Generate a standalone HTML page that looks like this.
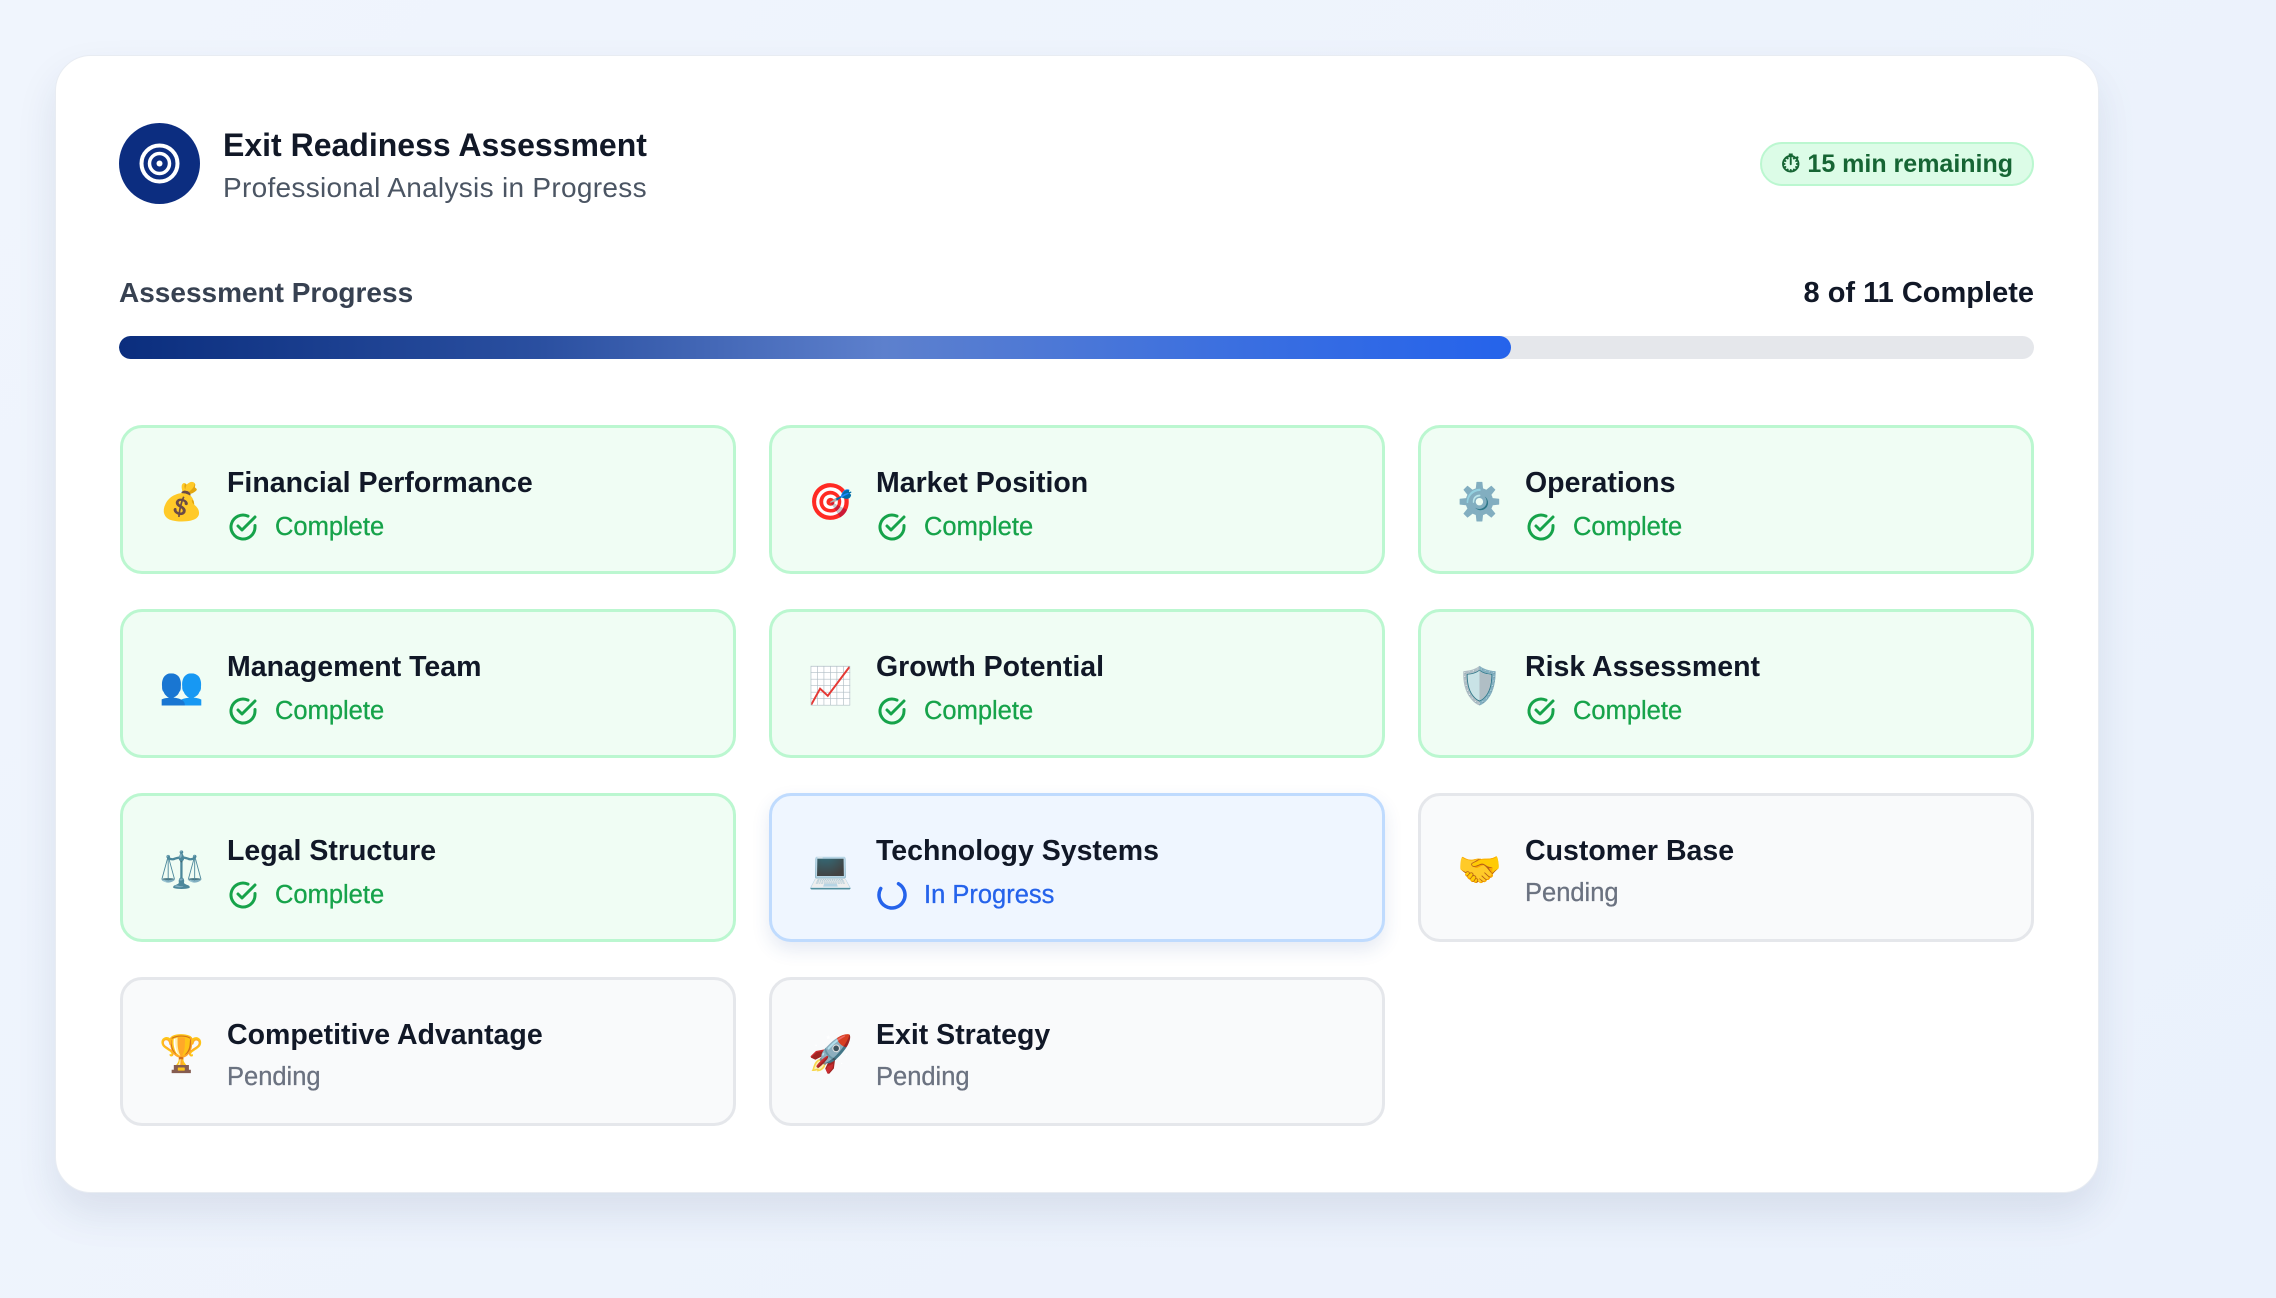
<!DOCTYPE html>
<html><head><meta charset="utf-8"><style>
*{box-sizing:border-box;margin:0;padding:0}
html,body{width:2276px;height:1298px;overflow:hidden}
body{background:linear-gradient(135deg,#f0f5fd,#eaf1fc);font-family:"Liberation Sans","DejaVu Sans",sans-serif;position:relative}
.main{position:absolute;left:55px;top:55px;width:2044px;height:1138px;background:#fff;border-radius:36px;border:1px solid #e8ecf2;box-shadow:0 20px 40px rgba(30,50,90,.10)}
.logo{position:absolute;left:119px;top:123px;width:81px;height:81px;border-radius:50%;background:#0c2d80}
.t1{position:absolute;left:223px;top:127px;font-size:32px;font-weight:bold;color:#111827}
.t2{position:absolute;left:223px;top:172px;font-size:28px;color:#4b5563;letter-spacing:.3px}
.badge{position:absolute;left:1760px;top:142px;width:274px;height:44px;border-radius:22px;background:#dcfce7;border:2px solid #bbf7d0;color:#166534;font-size:25px;font-weight:bold;line-height:40px;text-align:center}
.ap{position:absolute;left:119px;top:277px;font-size:28px;font-weight:bold;color:#374151}
.cnt{position:absolute;right:242px;top:277px;font-size:29px;font-weight:bold;color:#111827}
.bar{position:absolute;left:119px;top:336px;width:1915px;height:23px;border-radius:12px;background:#e5e7eb;overflow:hidden}
.fill{height:100%;width:1392px;border-radius:12px;background:linear-gradient(90deg,#0b2e7e 0%,#2a4fa0 30%,#5d80cd 55%,#3b6fe0 80%,#2563eb 100%)}
.c{position:absolute;width:616px;height:149px;border-radius:22px;border:3px solid #bbf7d0;background:#f0fdf4}
.c .e{position:absolute;left:36px;top:54px;font-size:36px;line-height:40px;width:44px;text-align:center}
.c .n{position:absolute;left:104px;top:39px;font-size:28.5px;font-weight:bold;color:#111827}
.c .s{position:absolute;left:104px;top:83px;font-size:25.5px;color:#16a34a;display:flex;align-items:center;gap:16px;-webkit-text-stroke:.3px currentColor}
.c.p{border-color:#e5e7eb;background:#f9fafb}
.c.p .s{color:#6b7280}
.c.ip{border-color:#bfdbfe;background:#eff6ff;box-shadow:0 8px 18px rgba(40,80,160,.12)}
.c.ip .s{color:#2563eb}
</style></head><body>
<div class="main"></div>
<div class="logo"><svg width="81" height="81" viewBox="0 0 81 81"><circle cx="40.5" cy="40.5" r="18" fill="none" stroke="#fff" stroke-width="4"/><circle cx="40.5" cy="40.5" r="10" fill="none" stroke="#fff" stroke-width="3.5"/><circle cx="40.5" cy="40.5" r="3" fill="#fff"/></svg></div>
<div class="t1">Exit Readiness Assessment</div>
<div class="t2">Professional Analysis in Progress</div>
<div class="badge">⏱ 15 min remaining</div>
<div class="ap">Assessment Progress</div>
<div class="cnt">8 of 11 Complete</div>
<div class="bar"><div class="fill"></div></div>

<div class="c" style="left:120px;top:425px"><div class="e">💰</div><div class="n">Financial Performance</div><div class="s"><svg width="32" height="32" viewBox="0 0 32 32"><path d="M28 14.5V16a12 12 0 1 1-7-10.9" fill="none" stroke="#16a34a" stroke-width="3" stroke-linecap="round"/><path d="M11 15l4 4 13-13" fill="none" stroke="#16a34a" stroke-width="3" stroke-linecap="round" stroke-linejoin="round"/></svg>Complete</div></div>
<div class="c" style="left:769px;top:425px"><div class="e">🎯</div><div class="n">Market Position</div><div class="s"><svg width="32" height="32" viewBox="0 0 32 32"><path d="M28 14.5V16a12 12 0 1 1-7-10.9" fill="none" stroke="#16a34a" stroke-width="3" stroke-linecap="round"/><path d="M11 15l4 4 13-13" fill="none" stroke="#16a34a" stroke-width="3" stroke-linecap="round" stroke-linejoin="round"/></svg>Complete</div></div>
<div class="c" style="left:1418px;top:425px"><div class="e">⚙️</div><div class="n">Operations</div><div class="s"><svg width="32" height="32" viewBox="0 0 32 32"><path d="M28 14.5V16a12 12 0 1 1-7-10.9" fill="none" stroke="#16a34a" stroke-width="3" stroke-linecap="round"/><path d="M11 15l4 4 13-13" fill="none" stroke="#16a34a" stroke-width="3" stroke-linecap="round" stroke-linejoin="round"/></svg>Complete</div></div>

<div class="c" style="left:120px;top:609px"><div class="e">👥</div><div class="n">Management Team</div><div class="s"><svg width="32" height="32" viewBox="0 0 32 32"><path d="M28 14.5V16a12 12 0 1 1-7-10.9" fill="none" stroke="#16a34a" stroke-width="3" stroke-linecap="round"/><path d="M11 15l4 4 13-13" fill="none" stroke="#16a34a" stroke-width="3" stroke-linecap="round" stroke-linejoin="round"/></svg>Complete</div></div>
<div class="c" style="left:769px;top:609px"><div class="e">📈</div><div class="n">Growth Potential</div><div class="s"><svg width="32" height="32" viewBox="0 0 32 32"><path d="M28 14.5V16a12 12 0 1 1-7-10.9" fill="none" stroke="#16a34a" stroke-width="3" stroke-linecap="round"/><path d="M11 15l4 4 13-13" fill="none" stroke="#16a34a" stroke-width="3" stroke-linecap="round" stroke-linejoin="round"/></svg>Complete</div></div>
<div class="c" style="left:1418px;top:609px"><div class="e">🛡️</div><div class="n">Risk Assessment</div><div class="s"><svg width="32" height="32" viewBox="0 0 32 32"><path d="M28 14.5V16a12 12 0 1 1-7-10.9" fill="none" stroke="#16a34a" stroke-width="3" stroke-linecap="round"/><path d="M11 15l4 4 13-13" fill="none" stroke="#16a34a" stroke-width="3" stroke-linecap="round" stroke-linejoin="round"/></svg>Complete</div></div>

<div class="c" style="left:120px;top:793px"><div class="e">⚖️</div><div class="n">Legal Structure</div><div class="s"><svg width="32" height="32" viewBox="0 0 32 32"><path d="M28 14.5V16a12 12 0 1 1-7-10.9" fill="none" stroke="#16a34a" stroke-width="3" stroke-linecap="round"/><path d="M11 15l4 4 13-13" fill="none" stroke="#16a34a" stroke-width="3" stroke-linecap="round" stroke-linejoin="round"/></svg>Complete</div></div>
<div class="c ip" style="left:769px;top:793px"><div class="e">💻</div><div class="n">Technology Systems</div><div class="s"><svg width="32" height="32" viewBox="0 0 32 32"><path d="M16 3A13 13 0 1 0 29 16" fill="none" stroke="#2563eb" stroke-width="3.5" stroke-linecap="round" transform="rotate(-60 16 16)"/></svg>In Progress</div></div>
<div class="c p" style="left:1418px;top:793px"><div class="e">🤝</div><div class="n">Customer Base</div><div class="s">Pending</div></div>

<div class="c p" style="left:120px;top:977px"><div class="e">🏆</div><div class="n">Competitive Advantage</div><div class="s">Pending</div></div>
<div class="c p" style="left:769px;top:977px"><div class="e">🚀</div><div class="n">Exit Strategy</div><div class="s">Pending</div></div>
</body></html>
